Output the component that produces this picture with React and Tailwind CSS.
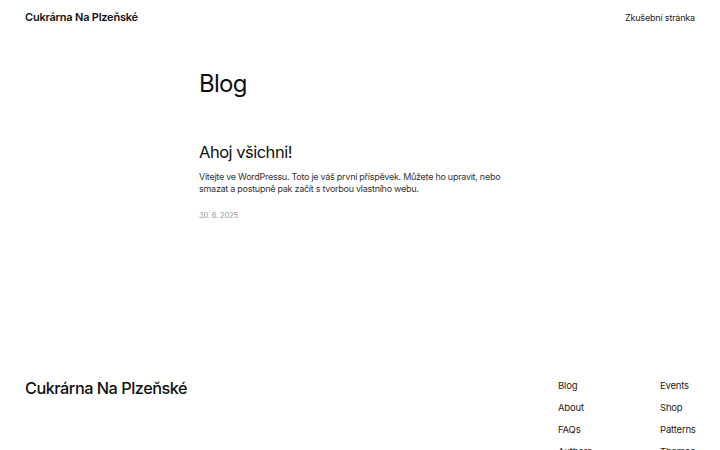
const FOOTER_A = ["Blog", "About", "FAQs", "Authors"];
const FOOTER_B = ["Events", "Shop", "Patterns", "Themes"];

export default function App() {
  return (
    <div
      className="h-[450px] w-[720px] overflow-hidden bg-white text-[#111111]"
      style={{ fontFamily: "Inter, 'Noto Sans', sans-serif" }}
    >
      {/* header */}
      <header className="flex h-[35px] items-center justify-between px-[25px]">
        <span className="text-[11px] font-semibold tracking-[-0.02em]">Cukrárna Na Plzeňské</span>
        <span className="text-[9px] tracking-[-0.02em] text-[#222]">Zkušební stránka</span>
      </header>

      {/* main */}
      <main className="ml-[199px] w-[330px]">
        <h1 className="mt-[32px] text-[24px] leading-[34px] tracking-[-0.03em]">Blog</h1>

        <article className="mt-[41px]">
          <h2 className="text-[16.5px] leading-[20px] tracking-[-0.03em]">Ahoj všichni!</h2>
          <p className="mt-[9px] text-[9px] leading-[12px] tracking-[-0.03em] text-[#333]">
            Vítejte ve WordPressu. Toto je váš první příspěvek. Můžete ho upravit, nebo
            <br />
            smazat a postupně pak začít s tvorbou vlastního webu.
          </p>
          <p className="mt-[15px] text-[7.5px] tracking-[-0.02em] text-[#999]">30. 6. 2025</p>
        </article>
      </main>

      {/* footer */}
      <footer className="mt-[157px] flex items-start justify-between pl-[25px] pr-[25px]">
        <span className="mt-[-2px] text-[16.3px] font-medium tracking-[-0.03em]">Cukrárna Na Plzeňské</span>
        <div className="mt-[1px] flex gap-[60px]">
          <ul className="flex w-[42px] flex-col gap-[9px] text-[9.5px] leading-[13px] tracking-[-0.02em] text-[#222]">
            {FOOTER_A.map((l) => (
              <li key={l}>{l}</li>
            ))}
          </ul>
          <ul className="flex w-[35px] flex-col gap-[9px] text-[9.5px] leading-[13px] tracking-[-0.02em] text-[#222]">
            {FOOTER_B.map((l) => (
              <li key={l}>{l}</li>
            ))}
          </ul>
        </div>
      </footer>
    </div>
  );
}
